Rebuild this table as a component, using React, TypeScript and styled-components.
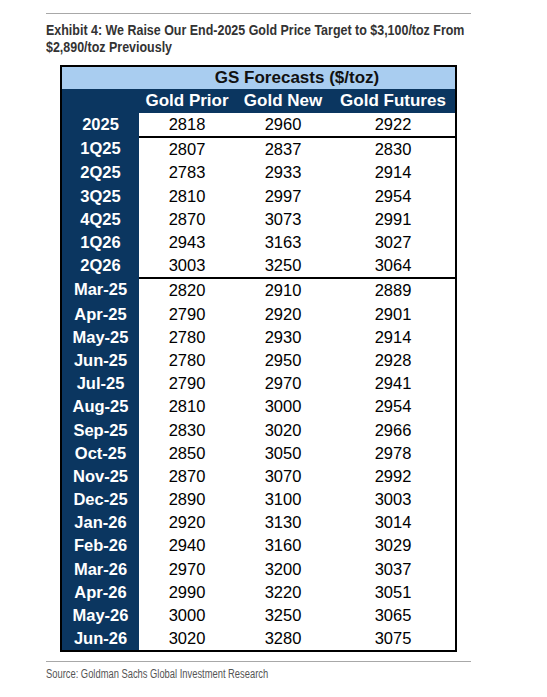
import React from "react";
import styled, { createGlobalStyle } from "styled-components";

const Global = createGlobalStyle`
  html, body { margin: 0; padding: 0; background: #ffffff; }
  body { font-family: "Liberation Sans", Arial, sans-serif; }
`;

const NAVY = "#0b3660";
const LIGHT = "#a9cdf0";

const Page = styled.div`
  width: 425px;
  padding: 13px 0 0 46px;
`;

const Rule = styled.div<{ $gap?: number }>`
  height: 0;
  border-top: 1px solid #a8a8a8;
  margin-top: ${(p) => p.$gap ?? 0}px;
`;

const Title = styled.h1`
  margin: 7.6px 0 0 0;
  height: 34px;
  font-family: "Liberation Sans", Arial, sans-serif;
  font-weight: 700;
  font-size: 14px;
  line-height: 17px;
  color: #333333;
  white-space: nowrap;
`;

const Condensed = styled.span<{ $scale: number }>`
  display: inline-block;
  transform: scaleX(${(p) => p.$scale});
  transform-origin: left top;
`;

const Table = styled.div`
  margin: 9.4px 0 0 14px;
  width: 397px;
  box-sizing: border-box;
  border: 2px solid #000;
`;

const Row = styled.div<{ $bg?: string; $h: number }>`
  display: grid;
  grid-template-columns: 77px 96px 96px 124px;
  height: ${(p) => p.$h}px;
  background: ${(p) => p.$bg ?? "#fff"};
`;

const BandTitle = styled.div`
  grid-column: 2 / span 3;
  display: flex;
  align-items: center;
  justify-content: center;
  font-weight: 700;
  font-size: 17px;
  color: #111;
`;

const HeadCell = styled.div`
  display: flex;
  align-items: center;
  justify-content: center;
  font-weight: 700;
  font-size: 17px;
  color: #fff;
  white-space: nowrap;
`;

const LabelCell = styled.div`
  display: flex;
  align-items: center;
  justify-content: center;
  background: ${NAVY};
  color: #fff;
  font-weight: 700;
  font-size: 16.5px;
`;

const ValueCell = styled.div<{ $top?: boolean }>`
  display: flex;
  align-items: center;
  justify-content: center;
  font-size: 16.5px;
  color: #000;
  box-sizing: border-box;
  border-top: ${(p) => (p.$top ? "2px solid #000" : "none")};
`;

const Source = styled.div`
  margin-top: 5px;
  font-family: "Liberation Sans", Arial, sans-serif;
  font-size: 12px;
  line-height: 14px;
  color: #555555;
  white-space: nowrap;
`;

type R = [string, number, number, number];

const groups: R[][] = [
  [["2025", 2818, 2960, 2922]],
  [
    ["1Q25", 2807, 2837, 2830],
    ["2Q25", 2783, 2933, 2914],
    ["3Q25", 2810, 2997, 2954],
    ["4Q25", 2870, 3073, 2991],
    ["1Q26", 2943, 3163, 3027],
    ["2Q26", 3003, 3250, 3064],
  ],
  [
    ["Mar-25", 2820, 2910, 2889],
    ["Apr-25", 2790, 2920, 2901],
    ["May-25", 2780, 2930, 2914],
    ["Jun-25", 2780, 2950, 2928],
    ["Jul-25", 2790, 2970, 2941],
    ["Aug-25", 2810, 3000, 2954],
    ["Sep-25", 2830, 3020, 2966],
    ["Oct-25", 2850, 3050, 2978],
    ["Nov-25", 2870, 3070, 2992],
    ["Dec-25", 2890, 3100, 3003],
    ["Jan-26", 2920, 3130, 3014],
    ["Feb-26", 2940, 3160, 3029],
    ["Mar-26", 2970, 3200, 3037],
    ["Apr-26", 2990, 3220, 3051],
    ["May-26", 3000, 3250, 3065],
    ["Jun-26", 3020, 3280, 3075],
  ],
];

const ROW_H = 23.2;

export default function App() {
  return (
    <>
      <Global />
      <Page>
        <Rule />
        <Title>
          <Condensed $scale={0.89}>
            Exhibit 4: We Raise Our End-2025 Gold Price Target to $3,100/toz From
            <br />
            $2,890/toz Previously
          </Condensed>
        </Title>
        <Table>
          <Row $bg={LIGHT} $h={22}>
            <BandTitle>GS Forecasts ($/toz)</BandTitle>
          </Row>
          <Row $bg={NAVY} $h={24}>
            <div />
            <HeadCell>Gold Prior</HeadCell>
            <HeadCell>Gold New</HeadCell>
            <HeadCell>Gold Futures</HeadCell>
          </Row>
          {groups.map((g, gi) =>
            g.map((r, ri) => {
              const top = gi > 0 && ri === 0;
              return (
                <Row key={r[0]} $h={top ? ROW_H + 2 : ROW_H}>
                  <LabelCell>{r[0]}</LabelCell>
                  <ValueCell $top={top}>{r[1]}</ValueCell>
                  <ValueCell $top={top}>{r[2]}</ValueCell>
                  <ValueCell $top={top}>{r[3]}</ValueCell>
                </Row>
              );
            })
          )}
        </Table>
        <Rule $gap={9} />
        <Source>
          <Condensed $scale={0.78}>
            Source: Goldman Sachs Global Investment Research
          </Condensed>
        </Source>
      </Page>
    </>
  );
}
